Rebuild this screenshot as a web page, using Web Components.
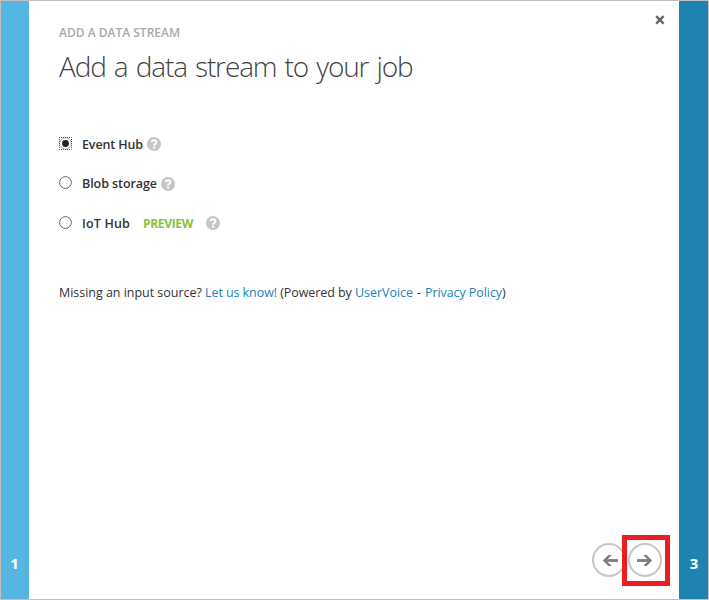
<!DOCTYPE html>
<html lang="en">
<head>
<meta charset="utf-8">
<title>Add a data stream</title>
<style>
html,body{margin:0;height:100%;overflow:hidden;background:#fff}
body{font-family:"Open Sans","Noto Sans",sans-serif;font-size:12.5px;color:#333}
</style>
</head>
<body>
<wizard-dialog></wizard-dialog>
<script>
const define = (name, html, setup) => {
  const template = document.createElement('template');
  template.innerHTML = html;
  customElements.define(name, class extends HTMLElement {
    connectedCallback() {
      if (this.shadowRoot) return;
      this.attachShadow({mode: 'open'}).append(template.content.cloneNode(true));
      if (setup) setup(this, this.shadowRoot);
    }
  });
};

// A single line of text, tracked so that it fills the given width.
define('text-run', `<style>
:host{display:inline-block;white-space:pre;flex:none}
span{display:inline-block}
</style><span><slot></slot></span>`, (host, root) => {
  const width = +host.getAttribute('width');
  const span = root.querySelector('span');
  const natural = span.getBoundingClientRect().width;
  host.style.width = width + 'px';
  span.style.letterSpacing = (width - natural) / host.textContent.length + 'px';
});

define('help-badge', `<style>
:host{display:block;width:14px;height:14px;flex:none}
svg{display:block}
</style><svg width="14" height="14" viewBox="0 0 14 14"><circle cx="7" cy="7" r="7" fill="#c6c6c6"/><path d="M4.7 5Q4.9 3.2 7.1 3.2Q9.4 3.2 9.4 5.1Q9.4 6.2 8.2 6.9Q7.1 7.5 7.1 8.7" fill="none" stroke="#fff" stroke-width="1.9"/><rect x="6.1" y="9.6" width="2" height="2" fill="#fff"/></svg>`);

define('radio-option', `<style>
:host{display:flex;align-items:center;height:18px;font-weight:600}
.r{width:13px;height:13px;margin-right:10px;flex:none;position:relative;top:-1px}
svg{display:block}
.on,:host([checked]) .off{display:none}
:host([checked]) .on{display:block}
</style><div class="r"><svg class="off" width="13" height="13"><circle cx="6.5" cy="6.5" r="5.9" fill="#fff" stroke="#666" stroke-width="1"/></svg>
<svg class="on" width="13" height="13"><circle cx="6.5" cy="6.5" r="5.7" fill="#fff" stroke="#aaa"/><rect x=".5" y=".5" width="12" height="12" fill="none" stroke="#555" stroke-dasharray="1 1" stroke-dashoffset=".5"/><circle cx="6.5" cy="6.5" r="3.4" fill="#222"/></svg></div><slot></slot>`);

define('step-bar', `<style>
:host{display:flex;flex:none;align-items:flex-end;justify-content:center;box-sizing:border-box;padding-bottom:26px;color:#fff;font-size:15px;line-height:20px;font-weight:700}
</style><slot></slot>`);

define('nav-button', `<style>
:host{display:block;width:34px;height:34px}
svg{display:block}
:host([back]) .a{transform:scaleX(-1);transform-origin:17.5px 17px}
</style><svg width="34" height="34"><circle cx="17" cy="17" r="16" fill="#fff" stroke="#c6c6c6" stroke-width="2"/><path class="a" d="M9 17.5H22" fill="none" stroke="#7d7d7d" stroke-width="2.8"/><path class="a" d="M15.2 12H18.6L24.2 17.5L18.6 23H15.2L20.7 17.5Z" fill="#7d7d7d"/></svg>`);

define('wizard-dialog', `<style>
:host{display:grid;grid-template-columns:28px 1fr 29px;width:709px;height:600px;box-sizing:border-box;border:1px solid #c0c0c0;background:#fff}
.left{background:#54b6e1;padding-right:1px}
.right{background:#1f83b1;padding-left:1px}
main{position:relative;padding:23px 30px 0;min-width:0}
.eyebrow{height:18px;line-height:18px;font-size:12px;font-weight:600;color:#a9a9a9}
h1{margin:3px 0 0;height:42px;line-height:42px;font-size:28px;font-weight:300;color:#444;word-spacing:2px}
.options{display:grid;row-gap:21.5px;margin-top:48px}
.preview{color:#86c440;font-weight:700;font-size:12px;margin-left:13px}
.g4{margin-left:4px}.g13{margin-left:13px}
.note{display:flex;margin-top:52px;height:18px;line-height:18px;font-size:12.5px}
a{color:#1c82b8;text-decoration:none}
.close{position:absolute;right:14px;top:14px}
.nav{position:absolute;right:17px;bottom:22px;display:flex;gap:2px}
.mark{position:absolute;right:9px;bottom:13px;width:48px;height:51px;box-sizing:border-box;border:5px solid #ed1c24}
</style>
<step-bar class="left">1</step-bar>
<main>
<div class="eyebrow"><text-run width="121">ADD A DATA STREAM</text-run></div>
<h1><text-run width="353.5">Add a data stream to your job</text-run></h1>
<div class="options">
<radio-option checked><text-run width="61">Event Hub</text-run><help-badge class="g4"></help-badge></radio-option>
<radio-option><text-run width="75">Blob storage</text-run><help-badge class="g4"></help-badge></radio-option>
<radio-option><text-run width="48">IoT Hub</text-run><text-run class="preview" width="50">PREVIEW</text-run><help-badge class="g13"></help-badge></radio-option>
</div>
<div class="note"><text-run width="146">Missing an input source? </text-run><a><text-run width="72">Let us know!</text-run></a><text-run width="78"> (Powered by </text-run><a><text-run width="58">UserVoice</text-run></a><text-run width="12"> - </text-run><a><text-run width="77">Privacy Policy</text-run></a><text-run width="4">)</text-run></div>
<svg class="close" width="10" height="10"><path d="M1.2 1.2L8.6 8.6M8.6 1.2L1.2 8.6" stroke="#666" stroke-width="2.4"/></svg>
<div class="nav"><nav-button back></nav-button><nav-button></nav-button></div>
<div class="mark"></div>
</main>
<step-bar class="right">3</step-bar>`);
</script>
</body>
</html>
